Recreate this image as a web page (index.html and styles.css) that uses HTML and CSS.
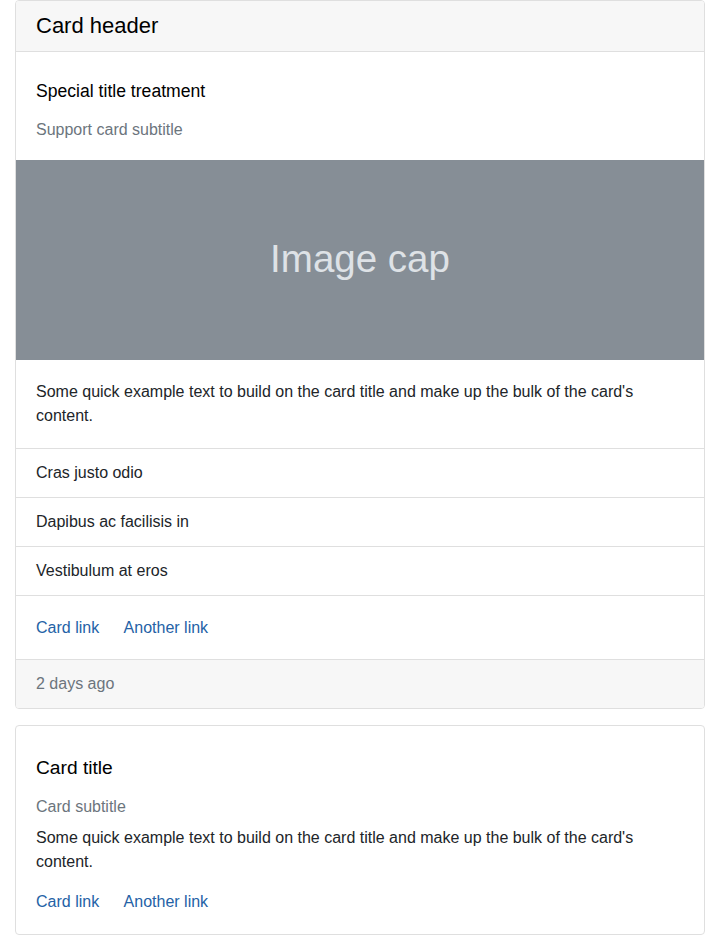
FILE: index.html
```html
<!DOCTYPE html>
<html lang="en">
<head>
<meta charset="utf-8">
<title>Cards</title>
<link rel="stylesheet" href="styles.css">
</head>
<body>
<div class="container">
  <div class="card">
    <div class="card-header">Card header</div>
    <div class="card-body intro">
      <h5 class="card-title small-title">Special title treatment</h5>
      <h6 class="card-subtitle">Support card subtitle</h6>
    </div>
    <div class="image-cap"><span>Image cap</span></div>
    <div class="card-body">
      <p class="card-text last">Some quick example text to build on the card title and make up the bulk of the card's content.</p>
    </div>
    <ul class="list-group">
      <li class="list-item">Cras justo odio</li>
      <li class="list-item">Dapibus ac facilisis in</li>
      <li class="list-item">Vestibulum at eros</li>
    </ul>
    <div class="card-body links-body">
      <a href="#" class="card-link">Card link</a>
      <a href="#" class="card-link">Another link</a>
    </div>
    <div class="card-footer">2 days ago</div>
  </div>

  <div class="card second">
    <div class="card-body second-body">
      <h5 class="card-title big-title">Card title</h5>
      <h6 class="card-subtitle sub2">Card subtitle</h6>
      <p class="card-text">Some quick example text to build on the card title and make up the bulk of the card's content.</p>
      <a href="#" class="card-link">Card link</a>
      <a href="#" class="card-link">Another link</a>
    </div>
  </div>
</div>
</body>
</html>
```
FILE: styles.css
```css
* { box-sizing: border-box; }
html, body { margin: 0; padding: 0; background: #fff; }
body {
  font-family: "Liberation Sans", Arial, sans-serif;
  font-size: 16px;
  line-height: 24px;
  color: #212529;
}
.container { padding: 0 15px; }
.card {
  border: 1px solid #dfdfdf;
  border-radius: 4px;
  overflow: hidden;
  background: #fff;
}
.card.second { margin-top: 16px; }
.card-header {
  background: #f7f7f7;
  border-bottom: 1px solid #dfdfdf;
  padding: 12px 20px;
  font-size: 22px;
  line-height: 26px;
  color: #000;
}
.card-body { padding: 20px; }
.card-body.intro { padding: 29px 20px 18px; }
.card-title { margin: 0; font-weight: normal; color: #000; }
.small-title { font-size: 17.6px; line-height: 21px; margin-bottom: 16px; }
.card-subtitle {
  margin: 0;
  font-size: 16px;
  font-weight: normal;
  line-height: 24px;
  color: #6c757d;
}
.image-cap {
  height: 200px;
  background: #868e96;
  color: #dee2e6;
  display: flex;
  align-items: center;
  justify-content: center;
  font-size: 38.5px;
  line-height: 46px;
  padding-bottom: 2px;
}
.card-text { margin: 0 0 16px; }
.card-text.last { margin-bottom: 0; }
.list-group { list-style: none; margin: 0; padding: 0; }
.list-item {
  border-top: 1px solid #dfdfdf;
  padding: 12px 20px;
}
.links-body { border-top: 1px solid #dfdfdf; padding: 20px 20px 19px; }
.card-link { color: #2462a6; text-decoration: none; }
.card-link + .card-link { margin-left: 20px; }
.card-footer {
  background: #f7f7f7;
  border-top: 1px solid #dfdfdf;
  padding: 12px 20px;
  color: #6c757d;
}
.second-body { padding: 30px 20px 20px; }
.big-title { font-size: 19.2px; line-height: 23px; margin-bottom: 16px; }
.sub2 { margin-bottom: 7px; }
```
